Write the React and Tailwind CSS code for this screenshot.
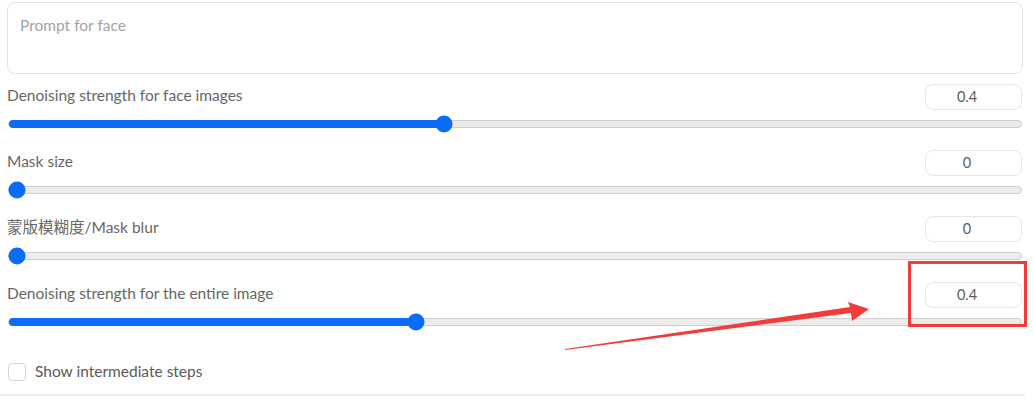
const sliders = [
  { label: 'Denoising strength for face images', value: '0.4', pct: 43 },
  { label: 'Mask size', value: '0', pct: 0 },
  { label: '蒙版模糊度/Mask blur', value: '0', pct: 0 },
  { label: 'Denoising strength for the entire image', value: '0.4', pct: 40.2 },
]

function Slider({ label, value, pct }) {
  return (
    <div className="flex flex-col">
      <div className="flex items-center justify-between h-[26px]">
        <span className="text-[15.5px] text-[#666] -mt-[3px]">{label}</span>
        <div className="w-[97px] h-[26px] mr-[1px] pr-[13px] flex items-center justify-center rounded-lg border border-[#e6e6e6] bg-white text-[14.5px] text-[#5c5c5c]">
          {value}
        </div>
      </div>
      <div className="relative mt-[10px] mb-[22px] h-[8px] ml-[1px] mr-[1px] rounded-full border border-[#cfcfcf] bg-[#ececec]">
        <div
          className="absolute left-0 top-[-1px] h-[8px] rounded-full bg-[#0a6cf7]"
          style={{ width: `${pct}%` }}
        />
        <div
          className="absolute top-1/2 w-[17px] h-[17px] -translate-x-1/2 -translate-y-1/2 rounded-full bg-[#0a6cf7]"
          style={{ left: `max(8px, ${pct}%)` }}
        />
      </div>
    </div>
  )
}

export default function App() {
  return (
    <div
      className="relative w-[1033px] h-[404px] bg-white pl-[7px] pr-[10px] pt-[2px] overflow-hidden"
      style={{ fontFamily: 'Lato, "Noto Sans CJK SC", sans-serif' }}
    >
      <div className="h-[72px] rounded-lg border border-[#e3e3e3] px-[12px] pt-[11px] text-[15.5px] text-[#a3a3a3]">
        Prompt for face
      </div>
      <div className="mt-[10px]">
        {sliders.map((s) => (
          <Slider key={s.label} {...s} />
        ))}
      </div>
      <div className="flex items-center gap-[9px] mt-[12px] ml-[1px]">
        <div className="w-[18px] h-[18px] rounded-[4px] border border-[#d4d4d4] bg-white" />
        <span className="text-[15.5px] text-[#5a5a5a]">Show intermediate steps</span>
      </div>
      <div className="absolute left-0 right-[8px] top-[394px] h-[2px] bg-[#ededed]" />

      {/* annotation */}
      <div className="absolute left-[908px] top-[261px] w-[119px] h-[66px] border-[3px] border-[#f23b3b]" />
      <svg className="absolute left-0 top-0" width="1033" height="404">
        <polygon points="565,349 850,307 848,302 869,309 852,321 851,313 565,350" fill="#f23b3b" />
      </svg>
    </div>
  )
}
